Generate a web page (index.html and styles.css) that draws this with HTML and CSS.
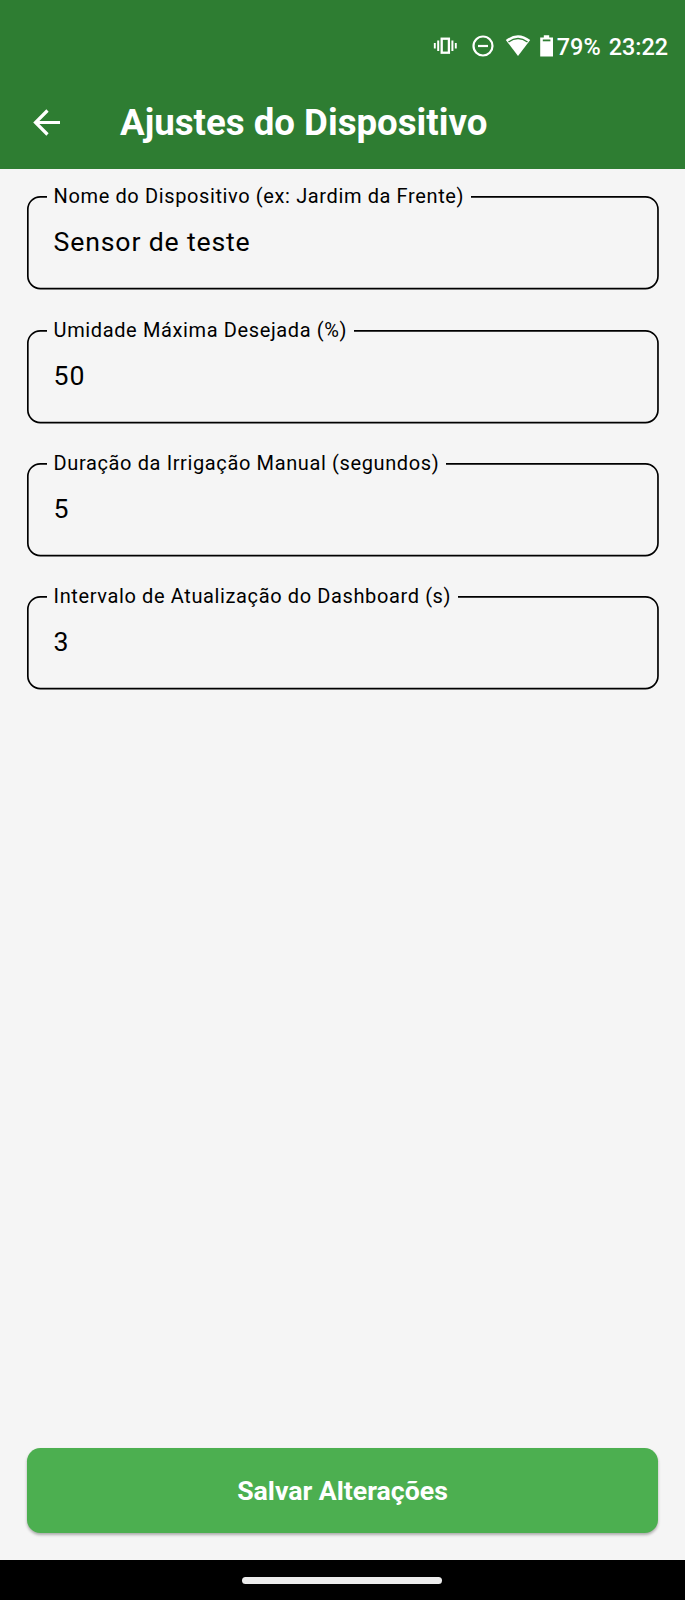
FILE: index.html
```html
<!DOCTYPE html>
<html lang="pt-BR">
<head>
<meta charset="utf-8">
<title>Ajustes do Dispositivo</title>
<link rel="stylesheet" href="styles.css">
</head>
<body>
<header class="header">
  <div class="status">
    <svg class="status-icons" width="122" height="26" viewBox="432 33 122 26" fill="none" stroke="#fff">
      <rect x="441.700" y="38.700" width="7.200" height="14" stroke-width="2.300"/>
      <path d="M438.200 40.500v10.500M452.400 40.500v10.500" stroke-width="2"/>
      <path d="M434.800 43v5.500M455.800 43v5.500" stroke-width="1.900"/>
      <circle cx="483" cy="46" r="9.500" stroke-width="2.200"/>
      <path d="M478 46h10" stroke-width="2.200"/>
      <path d="M505.800 40Q518 30.400 530.200 40L518 55.900Z" fill="#fff" stroke="none"/>
      <path d="M508.500 42Q518 35.200 527.500 42" stroke="#2e7d32" stroke-width="1.500"/>
      <path d="M543.800 35.200h5.400v2.300h3.800v18.900h-12.800v-18.900h3.600z" fill="#fff" stroke="none"/>
      <path d="M542.800 40.400h7.600" stroke="#2e7d32" stroke-width="1.800"/>
    </svg>
    <span class="battery">79%</span>
    <span class="clock">23:22</span>
  </div>
  <div class="toolbar">
    <svg class="back" width="28" height="28" viewBox="0 0 28 28" fill="none" stroke="#fff" stroke-width="3.2"><path d="M27 13.500H3M14.500 1.500L2.500 13.500l12 12"/></svg>
    <h1 class="title">Ajustes do Dispositivo</h1>
  </div>
</header>
<main class="content">
  <div class="field">
    <svg class="outline"><rect class="outline-rect" x=".83" y=".83" rx="12.500"/></svg>
    <label class="label">Nome do Dispositivo (ex: Jardim da Frente)</label>
    <div class="value">Sensor de teste</div>
  </div>
  <div class="field">
    <svg class="outline"><rect class="outline-rect" x=".83" y=".83" rx="12.500"/></svg>
    <label class="label">Umidade Máxima Desejada (%)</label>
    <div class="value">50</div>
  </div>
  <div class="field">
    <svg class="outline"><rect class="outline-rect" x=".83" y=".83" rx="12.500"/></svg>
    <label class="label">Duração da Irrigação Manual (segundos)</label>
    <div class="value">5</div>
  </div>
  <div class="field">
    <svg class="outline"><rect class="outline-rect" x=".83" y=".83" rx="12.500"/></svg>
    <label class="label">Intervalo de Atualização do Dashboard (s)</label>
    <div class="value">3</div>
  </div>
  <button class="save">Salvar Alterações</button>
</main>
<footer class="navbar"><div class="handle"></div></footer>
</body>
</html>
```

FILE: styles.css
```css
* { box-sizing: border-box; }
body {
  margin: 0;
  height: 1600px;
  display: flex;
  flex-direction: column;
  background: #f5f5f5;
  font-family: Roboto, sans-serif;
  color: #000;
}
.header {
  height: 169.2px;
  flex: none;
  background: #2e7d32;
  color: #fff;
}
.status {
  height: 76px;
  padding: 33px 17px 0 0;
  display: flex;
  justify-content: flex-end;
  align-items: flex-start;
  font-size: 23.4px;
  line-height: 28px;
  font-weight: 500;
}
.status-icons { margin-right: 3px; }
.clock { margin-left: 8px; }
.toolbar {
  height: 93px;
  padding-left: 33px;
  display: flex;
  align-items: center;
}
.title {
  margin: 0 0 0 59px;
  font-size: 36.67px;
  line-height: 46px;
  font-weight: 700;
}
.content {
  flex: 1;
  display: flex;
  flex-direction: column;
  gap: 40px;
  padding: 26.95px 26.6px 26.6px;
}
.field {
  position: relative;
  height: 93.4px;
  padding: 0 27px;
}
.outline {
  position: absolute;
  inset: 0;
  width: 100%;
  height: 100%;
  overflow: visible;
}
.outline-rect {
  width: calc(100% - 1.67px);
  height: calc(100% - 1.67px);
  fill: none;
  stroke: #000;
  stroke-width: 1.67px;
}
.label {
  position: relative;
  display: block;
  width: max-content;
  height: 24px;
  margin: -12px 0 0 -7px;
  padding: 0 6.4px 0 7px;
  background: #f5f5f5;
  font-size: 20px;
  line-height: 24px;
  letter-spacing: 0.62px;
}
.value {
  margin-top: 17px;
  font-size: 26.67px;
  line-height: 34px;
  letter-spacing: 0.83px;
}
.save {
  height: 85px;
  margin-top: auto;
  border: 0;
  border-radius: 13.3px;
  background: #4caf50;
  box-shadow: 0 2px 3px rgba(0, 0, 0, 0.3);
  color: #fff;
  font: 700 26.67px/32px Roboto, sans-serif;
}
.navbar {
  height: 40px;
  flex: none;
  padding-top: 17px;
  background: #000;
}
.handle {
  width: 200px;
  height: 7px;
  margin: 0 0 0 242px;
  border-radius: 4px;
  background: #ececec;
}
```
